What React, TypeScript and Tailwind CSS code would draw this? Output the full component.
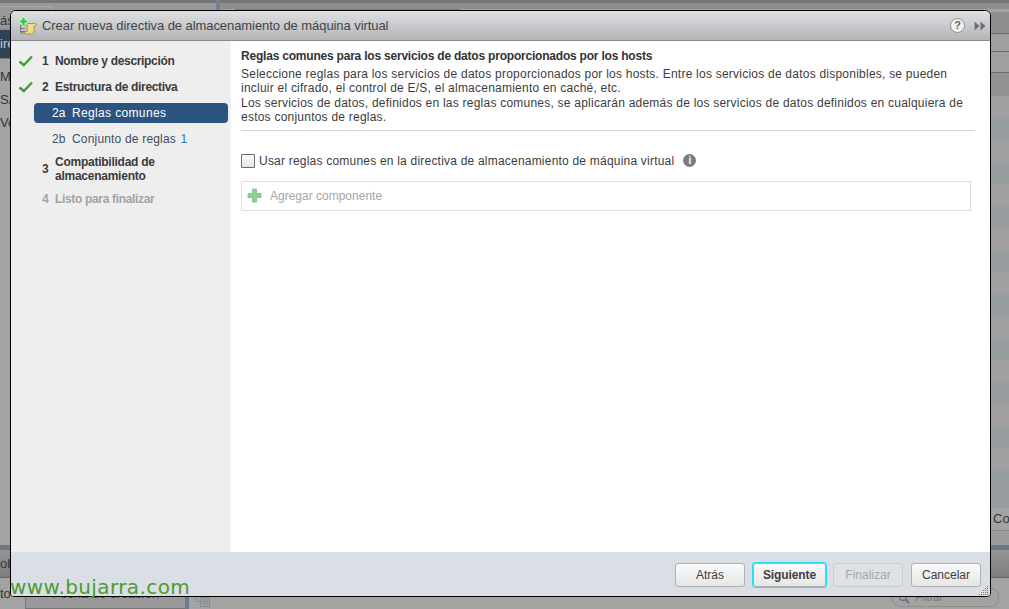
import React from 'react';

const FONT = 'font-["Liberation_Sans",Arial,sans-serif]';

const Check = () => (
  <svg width="16" height="12" viewBox="0 0 16 12" className="shrink-0">
    <path d="M1.5 6.5 L5.8 10 L14 1.5" fill="none" stroke="#3f9e34" strokeWidth="2.4" />
  </svg>
);

const PlusIcon = () => (
  <svg width="15" height="15" viewBox="0 0 15 15" className="shrink-0">
    <path d="M5.5 1h4v4.5H14v4H9.5V14h-4V9.5H1v-4h4.5z" fill="#8fd08f" stroke="#79bd7d" strokeWidth="0.8" />
  </svg>
);

const ScrollIcon = () => (
  <svg width="18" height="18" viewBox="0 0 18 18" className="shrink-0">
    {/* grey list lines behind the scroll */}
    <path d="M2 8.5h5M2 11.5h4M2 14.5h4M1.5 8v8h5" fill="none" stroke="#777" strokeWidth="1" />
    {/* scroll */}
    <path
      d="M8 6.5h8c.9 0 1.4.7 1.4 1.4 0 .7-.5 1.3-1.2 1.3H15v6.2c0 1.1-.8 1.6-1.6 1.6H7c-.9 0-1.4-.7-1.4-1.4 0-.7.5-1.2 1.2-1.2h1.4V8.3c0-.7-.2-1.3-.2-1.8z"
      fill="#f2dc82"
      stroke="#9c8a3e"
      strokeWidth="0.8"
    />
    <path d="M3 .5h3v2.5h2.5v3H6v2.5H3V6H.5V3H3z" fill="#38c546" stroke="#e9f7ea" strokeWidth="0.7" />
  </svg>
);

const HelpIcon = () => (
  <div className="flex h-[15px] w-[15px] items-center justify-center rounded-full border border-[#8f8f8f] bg-[#f1f1f1] text-[11px] leading-none font-bold text-[#666]">
    ?
  </div>
);

const Forward = () => (
  <svg width="12" height="10" viewBox="0 0 12 10" className="shrink-0">
    <path d="M0.5 0.5 L5.5 5 L0.5 9.5z M6.5 0.5 L11.5 5 L6.5 9.5z" fill="#6f7073" />
  </svg>
);

const InfoIcon = () => (
  <div className="ml-[9px] flex h-[13px] w-[13px] items-center justify-center rounded-full bg-[#7d7d7d] text-[10px] leading-none font-bold text-white">
    i
  </div>
);

const Grip = () => (
  <svg width="10" height="10" viewBox="0 0 10 10" className="absolute right-[1px] bottom-[1px]">
    {[[8, 1], [6, 3], [8, 3], [4, 5], [6, 5], [8, 5], [2, 7], [4, 7], [6, 7], [8, 7], [0, 9], [2, 9], [4, 9], [6, 9], [8, 9]].map(([x, y]) => (
      <rect key={`${x}-${y}`} x={x} y={y} width="1" height="1" fill="#777" />
    ))}
  </svg>
);

const SearchGlyph = () => (
  <svg width="12" height="12" viewBox="0 0 12 12" className="shrink-0">
    <circle cx="5" cy="5" r="3.5" fill="none" stroke="#6f7377" strokeWidth="1.6" />
    <path d="M7.5 7.5 L11 11" stroke="#6f7377" strokeWidth="2" />
  </svg>
);

const ListGlyph = () => (
  <svg width="17" height="13" viewBox="0 0 17 13" className="shrink-0">
    <path d="M1 .5h8v3M1 .5v7h4" fill="none" stroke="#8a8e92" />
    <path d="M5.5 3.5h9v9h-9zM7 6h6M7 8h6M7 10h6" fill="none" stroke="#84898e" />
  </svg>
);

interface StepProps {
  done?: boolean;
  num: string;
  muted?: boolean;
  children: React.ReactNode;
}

const Step: React.FC<StepProps> = ({ done, num, muted, children }) => (
  <div className={`flex items-center pl-[7px] font-bold ${muted ? 'text-[#a3a3a3]' : 'text-[#3b3b3b]'}`}>
    <span className="flex w-[24px] items-center">{done && <Check />}</span>
    <span className="w-[13px]">{num}</span>
    <span className="tracking-[-0.33px]">{children}</span>
  </div>
);

const FootButton: React.FC<{ label: string; primary?: boolean; disabled?: boolean; className?: string }> = ({ label, primary, disabled, className }) => (
  <div
    className={`flex h-[24px] items-center justify-center rounded-[3px] border text-[12px] ${
      disabled
        ? 'border-[#c9ccd0] bg-[#dfe1e5] text-[#a5a8ab]'
        : 'border-[#b0b0b0] bg-gradient-to-b from-[#fbfbfb] to-[#e6e6e6] text-[#404040]'
    } ${primary ? 'border-[1px] border-[#22dcf2] font-bold tracking-[-0.1px] shadow-[0_0_0_1px_#22dcf2]' : ''} ${className ?? ''}`}
  >
    {label}
  </div>
);

const Background = () => (
  <div className="flex h-[609px] w-full flex-col overflow-hidden bg-[#a3a3a3] text-[13px] text-[#2d3640]">
    <div className="flex h-[545px]">
      <div className="flex w-[216px] flex-col">
        <div className="h-[3px] bg-[#777]" />
        <div className="flex h-[25px] bg-[#989898]">
          <div className="mt-[3px] flex w-[35px] items-end rounded-tr-[4px] border-t border-r border-[#aaa] pb-[1px] leading-none">ás</div>
          <div className="mt-[3px] w-[18px] rounded-tr-[4px] border-t border-r border-[#aaa]" />
        </div>
        <div className="h-[2px] bg-[#8a8a8a]" />
        <div className="flex h-[28px] items-center bg-[#2f4358] text-[#c8ced4]">ire</div>
        <div className="h-px bg-[#777]" />
        <div className="mt-[10px] flex flex-col gap-[8px] leading-[15px]">
          <span>M I</span>
          <span>SA</span>
          <span>Vo</span>
        </div>
      </div>
      <div className="w-[4px] bg-[#6f8293]" />
      <div className="flex flex-1 flex-col">
        <div className="h-[3px] bg-[#777]" />
        <div className="h-[6px] bg-[#8e8e8e]" />
        <div className="ml-[15px] h-[3px] w-[225px] bg-[#777]" />
        <div className="h-[21px] bg-[#8e8e8e]" />
        <div className="h-px bg-[#6b6b6b]" />
        <div className="h-[17px] bg-[#a0a0a0]" />
        <div className="h-px bg-[#6b6b6b]" />
        <div className="h-[20px] bg-[#a0a0a0]" />
        <div className="h-px bg-[#6b6b6b]" />
        <div className="h-[23px] bg-[#939393]" />
        <div className="h-[22px] bg-[#a0a0a0]" />
        {['a', 'b', 'c', 'd', 'e', 'f', 'g', 'h', 'i', 'j', 'k', 'l', 'm', 'n', 'o', 'p', 'q'].map((k, i) => (
          <div key={k} className={`h-[22px] ${i % 2 === 0 ? 'bg-[#989da0]' : 'bg-[#a1a0a0]'}`} />
        ))}
        <div className="h-[16px] bg-[#989da0]" />
        <div className="flex h-[22px] items-center justify-end bg-[#a3a3a3]">
          <span className="w-[16px] overflow-hidden text-[#2e3a46]">Co</span>
        </div>
        <div className="h-px bg-[#888]" />
        <div className="h-[14px] bg-[#9c9c9c]" />
      </div>
    </div>
    <div className="h-[5px] bg-[#6c7780]" />
    <div className="flex h-[27px] items-center bg-gradient-to-b from-[#949494] to-[#7d7d7d] leading-none">ob</div>
    <div className="h-px bg-[#666]" />
    <div className="flex flex-1">
      <div className="flex w-[186px] items-center text-[#333]">
        <span className="w-[25px]">to</span>
        <div className="flex h-full flex-1 items-center justify-center border border-[#777] bg-[#999] text-[#444]">Fecha de creación</div>
      </div>
      <div className="w-[3px] bg-[#6c7c8a]" />
      <div className="flex flex-1 items-end justify-between pr-[10px] pb-[2px] pl-[6px]">
        <ListGlyph />
        <div className="flex h-[19px] w-[107px] items-center rounded-[8px] border border-[#8e8e8e] pl-[5px] text-[11px] text-[#777]">
          <SearchGlyph />
          <span className="ml-[5px]">Filtrar</span>
        </div>
      </div>
    </div>
  </div>
);

export default function App() {
  return (
    <div className={`relative h-[609px] w-[1009px] overflow-hidden ${FONT}`}>
      <Background />

      {/* wizard window over the greyed out client */}
      <div className="absolute top-[10px] left-[10px] flex h-[587px] w-[981px] flex-col overflow-hidden rounded-t-[6px] rounded-b-[4px] border border-black bg-white text-[12px]">
        <header className="flex h-[30px] shrink-0 items-center border-b border-[#8a8a8a] bg-gradient-to-b from-[#dfe0e3] to-[#b3b4b7] pr-[4px] pl-[8px]">
          <ScrollIcon />
          <span className="ml-[5px] flex-1 text-[13px] tracking-[-0.07px] text-[#444]">Crear nueva directiva de almacenamiento de máquina virtual</span>
          <HelpIcon />
          <span className="ml-[9px]"><Forward /></span>
        </header>

        <div className="flex min-h-0 flex-1">
          <nav className="flex w-[220px] shrink-0 flex-col border-r border-[#f4f4f4] bg-[#eeeeee] pt-[13px] pb-0 text-[12px] leading-[14px]">
            <Step done num="1">Nombre y descripción</Step>
            <div className="mt-[12px]">
              <Step done num="2">Estructura de directiva</Step>
            </div>
            <div className="mt-[9px] mr-[2px] ml-[23px] flex h-[20px] items-center rounded-[4px] bg-[#2b5480] pl-[18px] text-white">
              <span className="w-[20px]">2a</span>
              <span className="tracking-[0.35px]">Reglas comunes</span>
            </div>
            <div className="mt-[6px] ml-[41px] flex h-[20px] items-center text-[#3f4f5e]">
              <span className="w-[20px]">2b</span>
              <span className="tracking-[0.18px]">Conjunto de reglas <span className="ml-[1px] text-[#2a78b5]">1</span></span>
            </div>
            <div className="mt-[6px] flex items-center pl-[31px] font-bold text-[#3b3b3b]">
              <span className="w-[13px]">3</span>
              <span className="tracking-[-0.25px]">Compatibilidad de<br />almacenamiento</span>
            </div>
            <div className="mt-[9px]">
              <Step muted num="4">Listo para finalizar</Step>
            </div>
          </nav>

          <main className="min-w-0 flex-1 pt-[8px] pr-[15px] pl-[10px] text-[#3c3c3c]">
            <h2 className="text-[12px] leading-[14px] font-bold tracking-[-0.21px] text-[#333]">Reglas comunes para los servicios de datos proporcionados por los hosts</h2>
            <p className="mt-[4px] border-b border-[#d6d6d6] pb-[5px] text-[12px] leading-[14.4px] tracking-[0.23px]">
              Seleccione reglas para los servicios de datos proporcionados por los hosts. Entre los servicios de datos disponibles, se pueden
              <br />
              incluir el cifrado, el control de E/S, el almacenamiento en caché, etc.
              <br />
              Los servicios de datos, definidos en las reglas comunes, se aplicarán además de los servicios de datos definidos en cualquiera de
              <br />
              estos conjuntos de reglas.
            </p>
            <div className="mt-[21px] flex items-center">
              <div className="h-[14px] w-[14px] rounded-[1px] border border-[#6b6b6b] bg-gradient-to-b from-[#fafafa] to-[#e8e8e8]" />
              <span className="ml-[4px] tracking-[0.21px]">Usar reglas comunes en la directiva de almacenamiento de máquina virtual</span>
              <InfoIcon />
            </div>
            <div className="mt-[11px] mr-[4px] flex h-[30px] items-center border border-[#dddddd] pl-[5px] text-[#a6a6a6]">
              <PlusIcon />
              <span className="ml-[8px]">Agregar componente</span>
            </div>
          </main>
        </div>

        <footer className="relative flex h-[44px] shrink-0 items-start justify-end bg-[#dadee5] pt-[11px] pr-[9px]">
          <FootButton label="Atrás" className="w-[70px]" />
          <FootButton label="Siguiente" primary className="ml-[8px] w-[73px]" />
          <FootButton label="Finalizar" disabled className="ml-[7px] w-[70px]" />
          <FootButton label="Cancelar" className="ml-[8px] w-[70px]" />
          <Grip />
        </footer>
      </div>

      <div className="absolute bottom-[10px] left-[10px] font-['DejaVu_Sans',sans-serif] text-[20px] leading-[24px] tracking-[0.4px] text-[#4a9c2e]">
        www.bujarra.com
      </div>
    </div>
  );
}
